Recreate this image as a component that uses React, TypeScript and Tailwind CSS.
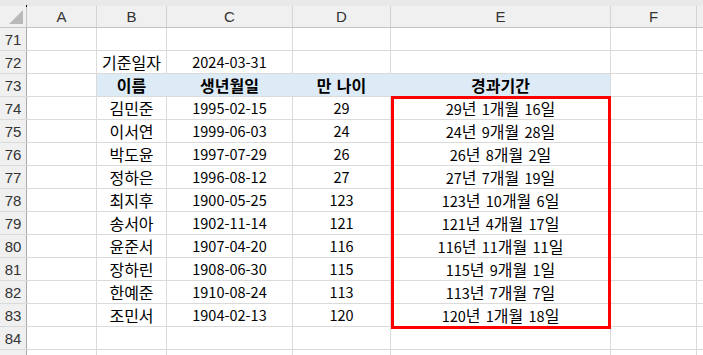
import React from "react";

const cols = [
  { key: "A", w: "w-[70px]" },
  { key: "B", w: "w-[70px]" },
  { key: "C", w: "w-[126px]" },
  { key: "D", w: "w-[98px]" },
  { key: "E", w: "w-[220px]" },
  { key: "F", w: "w-[86px]" },
];

const people = [
  ["김민준", "1995-02-15", "29", "29년 1개월 16일"],
  ["이서연", "1999-06-03", "24", "24년 9개월 28일"],
  ["박도윤", "1997-07-29", "26", "26년 8개월 2일"],
  ["정하은", "1996-08-12", "27", "27년 7개월 19일"],
  ["최지후", "1900-05-25", "123", "123년 10개월 6일"],
  ["송서아", "1902-11-14", "121", "121년 4개월 17일"],
  ["윤준서", "1907-04-20", "116", "116년 11개월 11일"],
  ["장하린", "1908-06-30", "115", "115년 9개월 1일"],
  ["한예준", "1910-08-24", "113", "113년 7개월 7일"],
  ["조민서", "1904-02-13", "120", "120년 1개월 18일"],
];

type Row = { n: number; cells: string[]; head?: boolean; label?: boolean };

const rows: Row[] = [
  { n: 71, cells: ["", "", "", "", "", ""] },
  { n: 72, cells: ["", "기준일자", "2024-03-31", "", "", ""] },
  { n: 73, cells: ["", "이름", "생년월일", "만 나이", "경과기간", ""], head: true },
  ...people.map((p, i) => ({ n: 74 + i, cells: ["", ...p, ""] })),
  { n: 84, cells: ["", "", "", "", "", ""] },
  { n: 85, cells: ["", "", "", "", "", ""], label: false },
];

// hangul runs a bit larger, like Malgun Gothic next to its digits
function CellText({ text }: { text: string }) {
  const parts = text.split(/([가-힣]+)/);
  return (
    <span className="[word-spacing:2px]">
      {parts.map((p, i) =>
        /[가-힣]/.test(p) ? (
          <span key={i} className="text-[16px]">
            {p}
          </span>
        ) : (
          <span key={i}>{p}</span>
        )
      )}
    </span>
  );
}

export default function App() {
  return (
    <div className="relative w-[703px] h-[355px] overflow-hidden bg-white text-black font-['Noto_Sans_CJK_KR','Liberation_Sans',sans-serif] text-[14.5px]">
      {/* top strip */}
      <div className="h-[6px] bg-[#e9e9e9]" />

      {/* column headers */}
      <div className="flex h-[22px] bg-[#f0f0f0] border-b border-[#c4c4c4] text-[#333]">
        <div className="relative w-[27px] shrink-0 border-r border-[#c4c4c4]">
          <div className="absolute right-[3px] bottom-[3px] w-0 h-0 border-l-[14px] border-l-transparent border-b-[14px] border-b-[#b9b9b9]" />
          <div className="absolute -right-[1px] -top-[1px] w-[1px] h-[2px] bg-black" />
        </div>
        {cols.map((c) => (
          <div
            key={c.key}
            className={`${c.w} shrink-0 border-r border-[#d4d4d4] flex items-center justify-center leading-none font-['Liberation_Sans',sans-serif] text-[15px]`}
          >
            {c.key}
          </div>
        ))}
        <div className="flex-1" />
      </div>

      {/* rows */}
      {rows.map((r) => (
        <div key={r.n} className="flex h-[23px] border-b border-[#dadada]">
          <div className="w-[27px] shrink-0 bg-[#f0f0f0] border-r border-[#a8a8a8] flex items-center justify-center text-[#333] font-['Liberation_Sans',sans-serif] text-[15px] leading-none">
            {r.label === false ? "" : r.n}
          </div>
          {cols.map((c, i) => {
            const filled = r.head && i >= 1 && i <= 4;
            const hideRight = r.head && i >= 1 && i <= 3;
            return (
              <div
                key={c.key}
                className={`${c.w} shrink-0 border-r flex items-center justify-center leading-none whitespace-nowrap ${
                  filled ? "bg-[#ddebf7] font-bold" : ""
                } ${hideRight ? "border-[#ddebf7]" : "border-[#dadada]"}`}
              >
                {r.cells[i] && <CellText text={r.cells[i]} />}
              </div>
            );
          })}
          <div className="flex-1" />
        </div>
      ))}

      {/* selection outline on 경과기간 */}
      <div className="absolute left-[391px] top-[96px] w-[220px] h-[233px] border-[3px] border-[#ff0000] pointer-events-none" />
    </div>
  );
}
